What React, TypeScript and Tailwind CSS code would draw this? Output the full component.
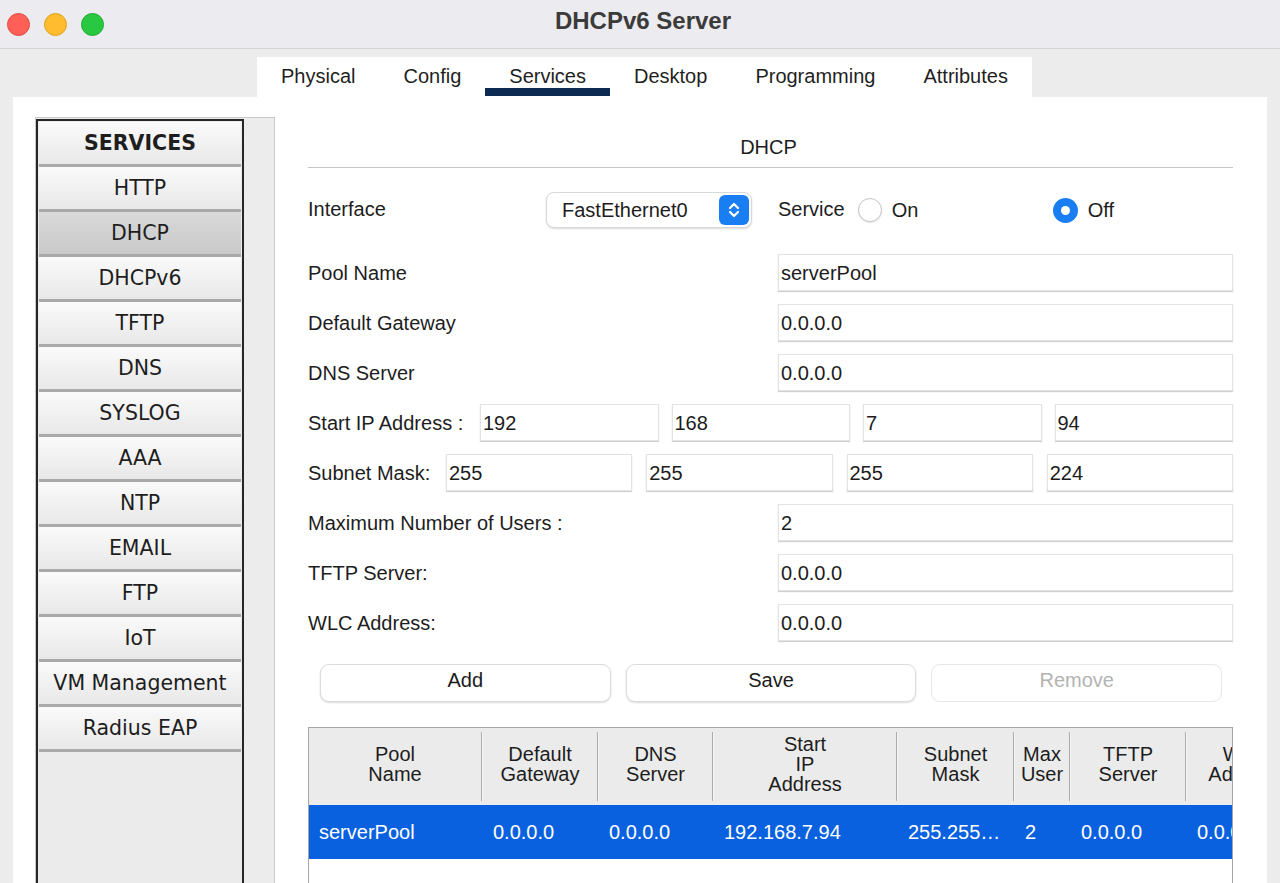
import React from "react";

const services = [
  "HTTP",
  "DHCP",
  "DHCPv6",
  "TFTP",
  "DNS",
  "SYSLOG",
  "AAA",
  "NTP",
  "EMAIL",
  "FTP",
  "IoT",
  "VM Management",
  "Radius EAP",
];

const tabs = ["Physical", "Config", "Services", "Desktop", "Programming", "Attributes"];

const columns: { head: React.ReactNode; w: string; cell: string }[] = [
  { head: <>Pool<br />Name</>, w: "w-[174px]", cell: "serverPool" },
  { head: <>Default<br />Gateway</>, w: "w-[116px]", cell: "0.0.0.0" },
  { head: <>DNS<br />Server</>, w: "w-[115px]", cell: "0.0.0.0" },
  { head: <>Start<br />IP<br />Address</>, w: "w-[184px]", cell: "192.168.7.94" },
  { head: <>Subnet<br />Mask</>, w: "w-[117px]", cell: "255.255…" },
  { head: <>Max<br />User</>, w: "w-[56px]", cell: "2" },
  { head: <>TFTP<br />Server</>, w: "w-[116px]", cell: "0.0.0.0" },
  { head: <>WLC<br />Address</>, w: "w-[116px]", cell: "0.0.0.0" },
];

const Field: React.FC<{ value: string; className?: string }> = ({ value, className }) => (
  <div
    className={
      "h-[37px] bg-white border border-[#e3e3e3] shadow-[0_1px_1px_rgba(0,0,0,0.18)] flex items-center pl-[2px] text-[20px] text-[#1c1c1c] " +
      (className ?? "")
    }
  >
    {value}
  </div>
);

const Row: React.FC<{ label: string; value: string }> = ({ label, value }) => (
  <div className="flex items-center h-[37px] mt-[13px] first:mt-0">
    <div className="w-[470px] shrink-0">{label}</div>
    <Field value={value} className="flex-1" />
  </div>
);

const App: React.FC = () => {
  return (
    <div className="w-[1280px] h-[883px] overflow-hidden bg-[#ececec] flex flex-col font-['Liberation_Sans',Arial,sans-serif] text-[#1d1d1d]">
      {/* Title bar */}
      <div className="h-[49px] shrink-0 bg-[#ecebef] border-b border-[#d3d3d3] grid grid-cols-[1fr_auto_1fr] items-center">
        <div className="flex items-center gap-[14px] pl-[7px]">
          <div className="w-[23px] h-[23px] rounded-full bg-[#fe5f57] border border-[#e24b43]" />
          <div className="w-[23px] h-[23px] rounded-full bg-[#febc2e] border border-[#e0a121]" />
          <div className="w-[23px] h-[23px] rounded-full bg-[#28c840] border border-[#1eab33]" />
        </div>
        <div className="text-[24px] font-bold text-[#3b3b3b] pl-[6px] pb-[6px]">DHCPv6 Server</div>
        <div />
      </div>

      {/* Tabs */}
      <div className="h-[48px] shrink-0 flex items-end pl-[257px]">
        <div className="h-[40px] bg-white flex">
          {tabs.map((t) => (
            <div key={t} className="relative h-full px-[24px] flex items-center text-[20px] text-[#1f1f1f] pb-[2px]">
              {t}
              {t === "Services" && (
                <div className="absolute left-0 right-0 bottom-[1px] h-[8px] bg-[#0c2a52]" />
              )}
            </div>
          ))}
        </div>
      </div>

      {/* Main panel */}
      <div className="flex-1 min-h-0 mx-[13px] bg-white flex">
        {/* Sidebar */}
        <div className="ml-[22px] mt-[20px] w-[240px] border border-[#c9c9c9] border-b-0 bg-[#ececec] flex">
          <div className="w-[208px] mt-[1px] border-2 border-b-0 border-[#262626] bg-[#ebebeb] flex flex-col font-['DejaVu_Sans',Verdana,sans-serif] text-[20.5px] text-[#1e1e1e] px-[1px] pt-[1px]">
            <div className="h-[45px] shrink-0 border-b-[3px] border-[#a9a9a9] bg-gradient-to-b from-[#fafafa] to-[#e8e8e8] flex items-center justify-center font-bold">
              SERVICES
            </div>
            {services.map((s) => (
              <div
                key={s}
                className={
                  "h-[45px] shrink-0 border-b-[3px] border-[#a9a9a9] flex items-center justify-center " +
                  (s === "DHCP"
                    ? "bg-gradient-to-b from-[#d9d9d9] to-[#c9c9c9]"
                    : "bg-gradient-to-b from-[#fafafa] to-[#e8e8e8]")
                }
              >
                {s}
              </div>
            ))}
          </div>
        </div>

        {/* Content */}
        <div className="ml-[33px] w-[925px] pt-[38px] flex flex-col text-[20px]">
          <div className="pb-[8px] border-b border-[#c6c6c6] text-center leading-[24px] pr-[4px]">DHCP</div>

          {/* Interface row */}
          <div className="mt-[24px] h-[36px] flex items-center">
            <div className="w-[238px] shrink-0 pb-[3px]">Interface</div>
            <div className="w-[206px] h-[36px] rounded-[8px] border border-[#d9d9d9] shadow-[0_1px_2px_rgba(0,0,0,0.15)] bg-white flex items-center justify-between pl-[15px] pr-[2px]">
              <span>FastEthernet0</span>
              <div className="w-[30px] h-[30px] rounded-[6px] bg-[#1a7ef3] flex items-center justify-center">
                <svg width="14" height="20" viewBox="0 0 14 20" fill="none" stroke="white" strokeWidth="2.2" strokeLinecap="round" strokeLinejoin="round">
                  <path d="M3 8 L7 4 L11 8" />
                  <path d="M3 12 L7 16 L11 12" />
                </svg>
              </div>
            </div>
            <div className="ml-[26px] pb-[3px]">Service</div>
            <div className="ml-[13px] w-[195px] flex items-center">
              <div className="w-[24px] h-[24px] rounded-full border border-[#c4c4c4] bg-white shadow-[0_1px_1px_rgba(0,0,0,0.1)]" />
              <span className="ml-[10px]">On</span>
            </div>
            <div className="flex items-center">
              <div className="w-[25px] h-[25px] rounded-full bg-[#1a7ef3] flex items-center justify-center">
                <div className="w-[9px] h-[9px] rounded-full bg-white" />
              </div>
              <span className="ml-[10px]">Off</span>
            </div>
          </div>

          {/* Fields */}
          <div className="mt-[26px] flex flex-col">
            <Row label="Pool Name" value="serverPool" />
            <Row label="Default Gateway" value="0.0.0.0" />
            <Row label="DNS Server" value="0.0.0.0" />
            <div className="flex items-center h-[37px] mt-[13px] gap-[13px]">
              <div className="w-[159px] shrink-0">Start IP Address :</div>
              {["192", "168", "7", "94"].map((v, i) => (
                <Field key={i} value={v} className="flex-1" />
              ))}
            </div>
            <div className="flex items-center h-[37px] mt-[13px] gap-[14px]">
              <div className="w-[124px] shrink-0">Subnet Mask:</div>
              {["255", "255", "255", "224"].map((v, i) => (
                <Field key={i} value={v} className="flex-1" />
              ))}
            </div>
            <Row label="Maximum Number of Users :" value="2" />
            <Row label="TFTP Server:" value="0.0.0.0" />
            <Row label="WLC Address:" value="0.0.0.0" />
          </div>

          {/* Buttons */}
          <div className="mt-[23px] h-[38px] flex gap-[15px] pl-[12px] pr-[11px]">
            {["Add", "Save", "Remove"].map((b) => (
              <div
                key={b}
                className={
                  "flex-1 rounded-[9px] border border-[#dcdcdc] shadow-[0_1px_2px_rgba(0,0,0,0.15)] bg-white flex items-center justify-center pb-[6px] " +
                  (b === "Remove" ? "text-[#b3b3b3] shadow-none border-[#e6e6e6]" : "text-[#1c1c1c]")
                }
              >
                {b}
              </div>
            ))}
          </div>

          {/* Table */}
          <div className="mt-[25px] flex-1 border border-b-0 border-[#a6a6a6] overflow-hidden">
            <div className="flex h-[77px] bg-[#ebebeb]">
              {columns.map((c, i) => (
                <div key={i} className={c.w + " shrink-0 flex"}>
                  <div className="flex-1 flex items-center justify-center text-center leading-[20px] pb-[6px] whitespace-nowrap overflow-visible">
                    {c.head}
                  </div>
                  {i < columns.length - 1 && (
                    <div className="w-[2px] my-[4px] border-l border-[#acacac] bg-[#f4f4f4]" />
                  )}
                </div>
              ))}
            </div>
            <div className="flex h-[54px] bg-[#0a61df] text-white">
              {columns.map((c, i) => (
                <div key={i} className={c.w + " shrink-0 flex items-center pl-[10px] whitespace-nowrap"}>
                  {c.cell}
                </div>
              ))}
            </div>
          </div>
        </div>
      </div>
    </div>
  );
};

export default App;
